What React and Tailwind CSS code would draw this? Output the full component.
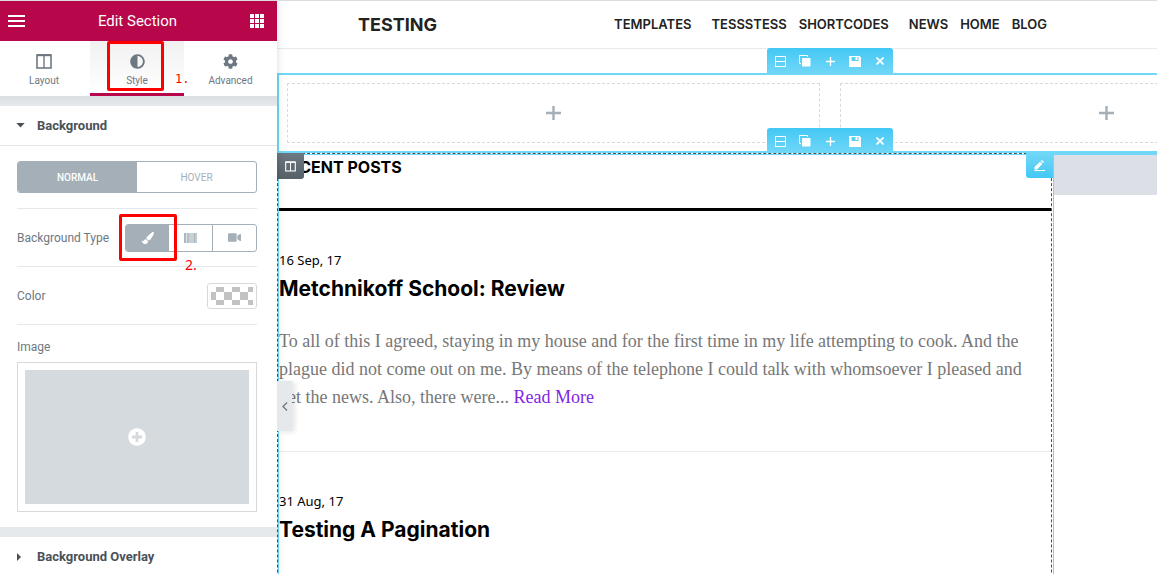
import React from "react";
import { FaCog, FaPaintBrush, FaVideo, FaPlusCircle, FaAdjust } from "react-icons/fa";

const heading = "font-['Inter',sans-serif]";

function Bars() {
  return (
    <svg width="17" height="12" viewBox="0 0 17 12" fill="currentColor" aria-hidden="true">
      <path d="M0 0h17v2H0zM0 5h17v2H0zM0 10h17v2H0z" />
    </svg>
  );
}

function AppsGrid() {
  return (
    <svg width="14" height="14" viewBox="0 0 14 14" fill="currentColor" aria-hidden="true">
      {[0, 5, 10].map((y) =>
        [0, 5, 10].map((x) => <rect key={x + "-" + y} x={x} y={y} width="4" height="4" />)
      )}
    </svg>
  );
}

function ColumnsIcon({ width, height }) {
  return (
    <svg width={width} height={height} viewBox="0 0 16 15" fill="none" stroke="currentColor" aria-hidden="true">
      <rect x="1" y="1" width="14" height="13" strokeWidth="1.6" />
      <path d="M1 1.2h14" strokeWidth="2" />
      <path d="M8 1v13" strokeWidth="1.4" />
    </svg>
  );
}

function Tab({ label, active, children }) {
  return (
    <button
      type="button"
      className={
        "relative flex h-[55px] flex-col items-center gap-1 border-b-[3px] pt-3 text-[10px] leading-4 text-[#6d7882] " +
        (active ? "border-[#b8064b] bg-linear-to-b from-[#f1f1f1] to-white" : "border-transparent bg-white")
      }
    >
      <span className="flex h-4 items-center">{children}</span>
      <span>{label}</span>
    </button>
  );
}

function SectionToolbar() {
  const button = "flex h-full w-[25px] items-center justify-center";
  return (
    <div className="flex h-[26px] w-[126px] justify-center rounded-t-[3px] bg-linear-to-b from-[#41c8f5] to-[#71d7f7] text-white">
      <button type="button" aria-label="Section structure" className={button}>
        <svg width="11" height="11" viewBox="0 0 11 11" fill="none" stroke="currentColor">
          <rect x="0.5" y="0.5" width="10" height="10" />
          <path d="M0 5.5h11" />
        </svg>
      </button>
      <button type="button" aria-label="Duplicate" className={button}>
        <svg width="12" height="12" viewBox="0 0 12 12">
          <path d="M8.5 2V.5h-8v8H2" fill="none" stroke="currentColor" />
          <rect x="3" y="3" width="8.5" height="8.5" rx="0.8" fill="currentColor" />
        </svg>
      </button>
      <button type="button" aria-label="Add" className={button}>
        <svg width="9" height="9" viewBox="0 0 9 9" fill="none" stroke="currentColor">
          <path d="M0 4.5h9M4.5 0v9" strokeWidth="1.4" />
        </svg>
      </button>
      <button type="button" aria-label="Save" className={button}>
        <svg width="12" height="11" viewBox="0 0 12 11" fill="currentColor">
          <path fillRule="evenodd" d="M0 0h10.5L12 1.5V11H0zM2.5 1v4h7V1H8.5v3H6.5V1z" />
        </svg>
      </button>
      <button type="button" aria-label="Remove" className={button}>
        <svg width="8" height="8" viewBox="0 0 8 8" fill="none" stroke="currentColor">
          <path d="M0.5 0.5l7 7M7.5 0.5l-7 7" strokeWidth="1.7" />
        </svg>
      </button>
    </div>
  );
}

function EmptyColumn() {
  return (
    <button
      type="button"
      aria-label="Add widget"
      className="flex h-[60px] flex-1 items-center justify-center border border-dashed border-[#d5dadf] text-[#a4afb7]"
    >
      <svg width="15" height="14" viewBox="0 0 15 14" stroke="currentColor" strokeWidth="2.4">
        <path d="M0 7h15M7.5 0v14" />
      </svg>
    </button>
  );
}

function Panel() {
  return (
    <aside className="relative z-20 w-[277px] shrink-0 bg-white font-['Roboto',sans-serif] text-[12px] text-[#6d7882] shadow-[0_0_8px_rgba(0,0,0,0.15)]">
      <header className="flex h-10 items-center justify-between bg-[#b8064b] pr-[13px] pl-2 text-white">
        <button type="button" aria-label="Menu"><Bars /></button>
        <h1 className="text-[15px] leading-5">Edit Section</h1>
        <button type="button" aria-label="Widgets"><AppsGrid /></button>
      </header>

      <div className="relative">
        <nav className="grid grid-cols-[88fr_2fr_94fr_93fr]">
          <Tab label="Layout"><ColumnsIcon width="16" height="15" /></Tab>
          <span />
          <Tab label="Style" active><FaAdjust size={15} /></Tab>
          <Tab label="Advanced"><FaCog size={15} /></Tab>
        </nav>
        <div className="pointer-events-none absolute top-0 left-[107px] h-[50px] w-[57px] rounded-xs border-[3px] border-[#f00]" />
        <span className="absolute top-[30px] left-[175px] font-['DejaVu_Sans_Mono',monospace] text-[12px] leading-4 text-[#f00]">1.</span>
      </div>

      <div className="h-[10px] bg-linear-to-b from-[#dcdfe2] to-[#e6e9ec]" />

      <button type="button" className="flex h-10 w-full items-center border-b border-[#e6e9ec] pl-4 text-[13px] font-bold text-[#495157]">
        <svg width="9" height="5" viewBox="0 0 9 5" fill="currentColor"><path d="M0.3 0h8.4L4.5 4.6z" /></svg>
        <span className="ml-3">Background</span>
      </button>

      <div className="pt-[15px] pr-5 pb-[15px] pl-[17px]">
        <div className="flex h-8 overflow-hidden rounded-[3px] border border-[#a4afb7] text-[10px]">
          <button type="button" className="flex-1 bg-[#a4afb7] font-medium text-white">NORMAL</button>
          <button type="button" className="flex-1 text-[#a4afb7]">HOVER</button>
        </div>

        <div className="relative mt-[15px] flex h-[59px] items-center justify-between border-y border-[#e6e9ec]">
          <span>Background Type</span>
          <div className="flex h-7 w-[132px] overflow-hidden rounded-[3px] border border-[#a4afb7] text-[#a4afb7]">
            <button type="button" aria-label="Classic" className="flex flex-1 items-center justify-center bg-[#a4afb7] text-white">
              <FaPaintBrush size={12} />
            </button>
            <button type="button" aria-label="Gradient" className="flex flex-1 items-center justify-center">
              <svg width="13" height="10" viewBox="0 0 13 10" fill="#a4afb7">
                <rect width="2" height="10" opacity="0.9" />
                <rect x="2" width="1" height="10" opacity="0.35" />
                <rect x="3" width="2" height="10" opacity="0.8" />
                <rect x="5" width="5" height="10" opacity="0.6" />
                <rect x="10" width="1" height="10" opacity="0.9" />
                <rect x="11" width="2" height="10" opacity="0.65" />
              </svg>
            </button>
            <button type="button" aria-label="Video" className="flex flex-1 items-center justify-center border-l border-[#a4afb7]">
              <FaVideo size={13} />
            </button>
          </div>
          <div className="pointer-events-none absolute top-[5px] left-[102px] h-[47px] w-[58px] rounded-xs border-[3px] border-[#f00]" />
          <span className="absolute top-[46px] left-[168px] font-['Noto_Sans',sans-serif] text-[14px] leading-5 text-[#f00]">2.</span>
        </div>

        <div className="flex h-[58px] items-center justify-between border-b border-[#e6e9ec]">
          <span>Color</span>
          <button type="button" aria-label="Pick color" className="flex h-[26px] w-[50px] items-center justify-center rounded-[3px] border border-[#d5dadf]">
            <svg width="42" height="18" viewBox="0 0 42 18" fill="#c2c2c2">
              <path d="M5 0h8v5H5zM21 0h8v5h-8zM37 0h5v5h-5zM0 5h5v8H0zM13 5h8v8h-8zM29 5h8v8h-8zM5 13h8v5H5zM21 13h8v5h-8zM37 13h5v5h-5z" />
            </svg>
          </button>
        </div>

        <div className="pt-[14px] leading-4">Image</div>
        <button type="button" aria-label="Choose image" className="mt-[7px] block h-[150px] w-full border border-[#d5dadf] p-[7px]">
          <span className="flex h-full items-center justify-center bg-[#d5dadf] text-white">
            <FaPlusCircle size={18} />
          </span>
        </button>
      </div>

      <div className="h-[10px] bg-[#e6e9ec]" />
      <button type="button" className="flex h-10 w-full items-center pl-[17px] text-[13px] font-bold text-[#495157]">
        <svg width="4" height="8" viewBox="0 0 4 8" fill="currentColor"><path d="M0 0l4 4-4 4z" /></svg>
        <span className="ml-4">Background Overlay</span>
      </button>

      <button
        type="button"
        aria-label="Hide panel"
        className="absolute top-[380px] left-full flex h-[50px] w-[15px] items-center justify-center bg-[#e6e9ec] text-[#6d7882] shadow-[3px_1px_5px_rgba(0,0,0,0.1)]"
      >
        <svg width="6" height="9" viewBox="0 0 6 9" fill="none" stroke="currentColor"><path d="M5 0.5l-4 4 4 4" strokeWidth="1.3" /></svg>
      </button>
    </aside>
  );
}

function Post({ date, title, children }) {
  return (
    <article className="border-b border-[#eaeaea] pt-[39px]">
      <div className="font-['Noto_Sans',sans-serif] text-[13px] leading-5 text-black">{date}</div>
      <h3 className={heading + " mt-px text-[21px] leading-9 font-bold text-black"}>{title}</h3>
      <p className="mt-5 mb-10 min-h-[84px] font-['Liberation_Serif',serif] text-[18px] leading-7 whitespace-nowrap text-[#777]">
        {children}
      </p>
    </article>
  );
}

const links = [
  ["TEMPLATES", "mr-2"],
  ["TESSSTESS", ""],
  ["SHORTCODES", "mr-2"],
  ["NEWS", ""],
  ["HOME", ""],
  ["BLOG", ""],
];

function Canvas() {
  return (
    <main className="min-w-0 flex-1 overflow-hidden bg-white">
      <header className={heading + " flex h-12 items-center justify-between border-b border-[#eaeaea] pr-[110px] pl-[81px] text-[#222]"}>
        <a href="#home" className="text-[18px] font-bold">TESTING</a>
        <nav className="flex gap-3 text-[13px] font-semibold">
          {links.map(([label, space]) => (
            <a key={label} href={"#" + label.toLowerCase()} className={space}>{label}</a>
          ))}
        </nav>
      </header>

      <section className="relative mt-6 w-[1106px] border-2 border-[#71d7f7] p-2">
        <div className="absolute -top-[27px] left-[488px]"><SectionToolbar /></div>
        <div className="flex gap-5">
          <EmptyColumn />
          <EmptyColumn />
        </div>
      </section>

      <section className="relative flex border-t-2 border-[#71d7f7]">
        <div className="absolute -top-[27px] left-[490px]"><SectionToolbar /></div>
        <div className="relative min-w-0 flex-1 border-r border-[#71d7f7]">
          <div className="absolute -top-[2px] right-px left-0 h-px bg-white" />
          <div className="pointer-events-none absolute -top-[2px] right-px bottom-0 left-0 border border-b-0 border-dashed border-[#495157]" />
          <button type="button" aria-label="Edit column" className="absolute -top-[2px] left-0 z-10 flex h-[26px] w-[27px] items-center justify-center rounded-br-[3px] bg-linear-to-b from-[#6d7882] to-[#556068] text-white">
            <ColumnsIcon width="11" height="11" />
          </button>
          <button type="button" aria-label="Edit widget" className="absolute -top-[2px] right-0 z-10 flex h-[25px] w-[27px] items-center justify-center rounded-bl-[3px] bg-linear-to-b from-[#71d7f7] to-[#41c8f5] text-white">
            <svg width="11" height="11" viewBox="0 0 11 11" fill="currentColor">
              <path d="M0.5 9.5V7L6 1.7 8.3 4 3 9.5zM6.7 1L7.5.3Q8 0 8.5.4L9.6 1.5Q10 2 9.6 2.5L9 3.3zM3 10h8v1H.5v-1z" />
            </svg>
          </button>
          <div className="mr-[2px] ml-px border-l border-[#71d7f7]">
            <h2 className={heading + " h-14 border-b-[3px] border-black text-[16px] leading-6 font-bold text-black"}>RECENT POSTS</h2>
            <Post date="16 Sep, 17" title="Metchnikoff School: Review">
              To all of this I agreed, staying in my house and for the first time in my life attempting to cook. And the
              <br />
              plague did not come out on me. By means of the telephone I could talk with whomsoever I pleased and
              <br />
              get the news. Also, there were... <a href="#read-more" className="text-[#8224e3]">Read More</a>
            </Post>
            <Post date="31 Aug, 17" title="Testing A Pagination" />
          </div>
        </div>
        <div className="h-10 w-[103px] bg-[#dcdfe5]" />
      </section>
    </main>
  );
}

export default function App() {
  return (
    <div className="flex h-screen overflow-hidden border-t border-[#dcdcdc] bg-white">
      <Panel />
      <Canvas />
    </div>
  );
}
